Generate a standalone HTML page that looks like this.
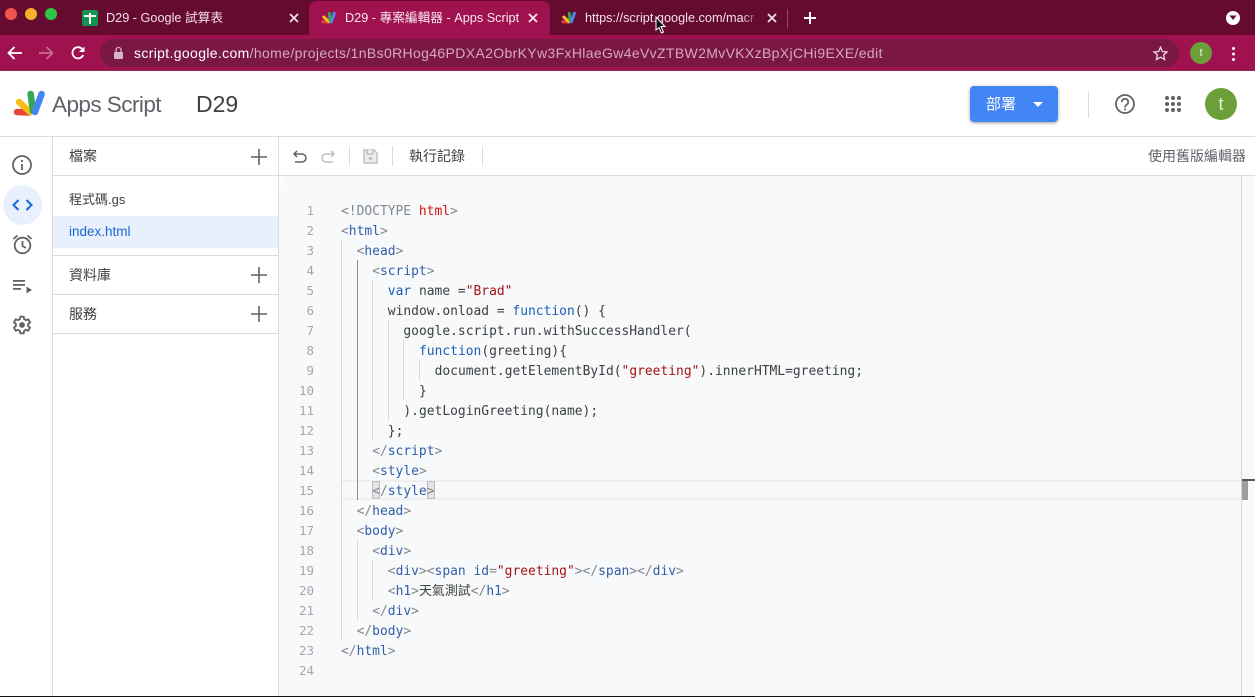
<!DOCTYPE html>
<html><head><meta charset="utf-8"><style>
html,body{margin:0;padding:0;width:1255px;height:697px;overflow:hidden;background:#fff}
body{position:relative;font-family:"Liberation Sans","Noto Sans CJK TC",sans-serif;color:#3c4043}
.a{position:absolute}
.t{position:absolute;white-space:nowrap}
svg{position:absolute;overflow:visible}
.c{position:absolute;left:0;margin-top:1px;white-space:pre;font:12.950px/20px "DejaVu Sans Mono","Noto Sans CJK TC",monospace;color:#3c4043}
.n{position:absolute;width:314px;left:0;text-align:right;font:12.500px/20px "DejaVu Sans Mono",monospace;color:#a4a8ad}
.g{color:#80868b}.b{color:#2f5fa8}.r{color:#a31515}.h{color:#d01010}.k{color:#1a5fb4}
.ig{position:absolute;width:1px;background:#d5d7da}
.ln{position:absolute;height:1px;background:#dadce0}
</style></head><body>
<!-- chrome tab bar -->
<div class="a" style="left:0;top:0;width:1255px;height:35px;background:#660b30"></div>
<div class="a" style="left:0;top:35px;width:1255px;height:36px;background:#a0124f"></div>
<div class="a" style="left:0;top:70px;width:1255px;height:1px;background:#8f2a55"></div>
<div class="a" style="left:309px;top:1px;width:241px;height:34px;background:#a0124f;border-radius:8px 8px 0 0"></div>
<div class="a" style="left:5px;top:8px;width:12px;height:12px;border-radius:50%;background:#f2544e"></div>
<div class="a" style="left:25px;top:8px;width:12px;height:12px;border-radius:50%;background:#f5b02e"></div>
<div class="a" style="left:45px;top:8px;width:12px;height:12px;border-radius:50%;background:#2fc546"></div>
<!-- sheets icon -->
<div class="a" style="left:82px;top:10px;width:16px;height:16px;background:#12934f;border-radius:2px"></div>
<div class="a" style="left:84px;top:15px;width:12px;height:2px;background:#fff"></div>
<div class="a" style="left:89px;top:13px;width:2px;height:11px;background:#fff"></div>
<div class="t" style="left:106px;top:10px;font-size:12.700px;line-height:16px;color:#f3dfe7">D29 - Google 試算表</div>
<svg style="left:290px;top:14px" width="8" height="8" stroke="#f3dfe7" stroke-width="1.800"><path d="M0 0L8 8M8 0L0 8"/></svg>
<svg style="left:321px;top:11px" width="16" height="14" viewBox="0 0 34 30"><g fill="none" stroke-linecap="round" stroke-width="6.500"><path d="M4 23L16 23.500" stroke="#e2463a"/><path d="M6 13L17 23" stroke="#f7bb1e"/><path d="M17.600 5L20 22" stroke="#33a852"/><path d="M28.600 5L22 23" stroke="#4a86ec"/></g></svg>
<div class="t" style="left:345px;top:10px;font-size:12.700px;line-height:16px;color:#f8e8ee">D29 - 專案編輯器 - Apps Script</div>
<svg style="left:529px;top:14px" width="8" height="8" stroke="#f8e8ee" stroke-width="1.800"><path d="M0 0L8 8M8 0L0 8"/></svg>
<svg style="left:561px;top:11px" width="16" height="14" viewBox="0 0 34 30"><g fill="none" stroke-linecap="round" stroke-width="6.500"><path d="M4 23L16 23.500" stroke="#e2463a"/><path d="M6 13L17 23" stroke="#f7bb1e"/><path d="M17.600 5L20 22" stroke="#33a852"/><path d="M28.600 5L22 23" stroke="#4a86ec"/></g></svg>
<div class="t" style="left:585px;top:10px;width:175px;overflow:hidden;font-size:12.700px;line-height:16px;color:#f3dfe7">https://script.google.com/macr</div>
<div class="a" style="left:742px;top:8px;width:18px;height:20px;background:linear-gradient(90deg,rgba(102,11,48,0),#660b30)"></div>
<svg style="left:768px;top:14px" width="8" height="8" stroke="#f3dfe7" stroke-width="1.800"><path d="M0 0L8 8M8 0L0 8"/></svg>
<div class="a" style="left:787px;top:9px;width:1px;height:19px;background:#8d4a66"></div>
<svg style="left:804px;top:12px" width="12" height="12" stroke="#fff" stroke-width="2"><path d="M6 0V12M0 6H12"/></svg>
<div class="a" style="left:1226px;top:11px;width:14px;height:14px;border-radius:50%;background:#fff"></div>
<svg style="left:1229px;top:15px" width="8" height="6"><path d="M0.500 0.500H7.500L4 5Z" fill="#660b30"/></svg>
<svg style="left:654px;top:16px" width="13" height="19"><path d="M2 1V14L5 11.500L7.500 17L9.500 16L7 10.500H11Z" fill="#111" stroke="#fff" stroke-width="1"/></svg>
<!-- toolbar -->
<svg style="left:7px;top:46px" width="15" height="14" fill="none" stroke="#fff" stroke-width="1.800"><path d="M15 7H1.500M7.500 1L1.500 7L7.500 13"/></svg>
<svg style="left:39px;top:46px" width="15" height="14" fill="none" stroke="#c66c91" stroke-width="1.800"><path d="M0 7H13.500M7.500 1L13.500 7L7.500 13"/></svg>
<svg style="left:71px;top:46px" width="14" height="14" fill="none" stroke="#fff" stroke-width="1.800"><path d="M12.200 9A5.600 5.600 0 1 1 11 2.800"/><path d="M13.500 0.500V6H8Z" fill="#fff" stroke="none"/></svg>
<div class="a" style="left:100px;top:39px;width:1079px;height:28px;border-radius:14px;background:#7a1744"></div>
<div class="a" style="left:114px;top:52px;width:9px;height:7px;background:#d8b4c4;border-radius:1px"></div>
<svg style="left:115px;top:47px" width="7" height="6" fill="none" stroke="#d8b4c4" stroke-width="1.300"><path d="M1 6V3A2.500 2.500 0 0 1 6 3V6"/></svg>
<div class="t" style="left:134px;top:44px;font-size:14px;line-height:18px;letter-spacing:.35px;color:#d6a9bd"><span style="color:#fff">script.google.com</span>/home/projects/1nBs0RHog46PDXA2ObrKYw3FxHlaeGw4eVvZTBW2MvVKXzBpXjCHi9EXE/edit</div>
<svg style="left:1153px;top:46px" width="15" height="15" fill="none" stroke="#f0dbe4" stroke-width="1.300"><path d="M7.500 1.200L9.400 5.500L14 6L10.600 9L11.600 13.600L7.500 11.200L3.400 13.600L4.400 9L1 6L5.600 5.500Z"/></svg>
<div class="a" style="left:1190px;top:42px;width:22px;height:22px;border-radius:50%;background:#6a9f3a;color:#eaf3e0;font-size:11px;line-height:22px;text-align:center">t</div>
<div class="a" style="left:1232px;top:47px;width:3px;height:3px;border-radius:50%;background:#fff;box-shadow:0 5.500px #fff,0 11px #fff"></div>
<!-- app header -->
<svg style="left:13px;top:89px" width="34" height="30" viewBox="0 0 34 30"><g fill="none" stroke-linecap="round" stroke-width="6.500"><path d="M4 23L16 23.500" stroke="#e2453a"/><path d="M6 13L17 23" stroke="#f9bc15"/><path d="M17.600 5L20 22" stroke="#33a852"/><path d="M28.600 5L22 23" stroke="#4285f4"/></g></svg>
<div class="t" style="left:52px;top:91px;font-size:22.500px;line-height:28px;letter-spacing:-.55px;color:#5f6368">Apps Script</div>
<div class="t" style="left:196px;top:89px;font-size:23px;line-height:30px;color:#3c4043">D29</div>
<div class="a" style="left:970px;top:86px;width:88px;height:36px;border-radius:4px;background:#4285f4;box-shadow:0 1px 3px rgba(60,64,67,.5)"></div>
<div class="t" style="left:986px;top:95px;font-size:15px;line-height:20px;color:#fff">部署</div>
<svg style="left:1033px;top:102px" width="10" height="5"><path d="M0 0H10L5 5Z" fill="#fff"/></svg>
<div class="a" style="left:1088px;top:91px;width:1px;height:27px;background:#dadce0"></div>
<svg style="left:1115px;top:94px" width="20" height="20" fill="none" stroke="#5f6368" stroke-width="1.800"><circle cx="10" cy="10" r="9"/><path d="M6.800 8A3.200 3.200 0 1 1 11.800 10.600C10.500 11.500 10 12 10 13.500" stroke-width="1.700"/><circle cx="10" cy="15.500" r="1" fill="#5f6368" stroke="none"/></svg>
<svg style="left:1165px;top:96px" width="16" height="16" fill="#5f6368"><circle cx="2" cy="2" r="2"/><circle cx="8" cy="2" r="2"/><circle cx="14" cy="2" r="2"/><circle cx="2" cy="8" r="2"/><circle cx="8" cy="8" r="2"/><circle cx="14" cy="8" r="2"/><circle cx="2" cy="14" r="2"/><circle cx="8" cy="14" r="2"/><circle cx="14" cy="14" r="2"/></svg>
<div class="a" style="left:1205px;top:88px;width:32px;height:32px;border-radius:50%;background:#6a9f3a;color:#e8f2dd;font-size:18px;line-height:32px;text-align:center">t</div>
<div class="ln" style="left:0;top:136px;width:1255px"></div>
<!-- left rail -->
<div class="a" style="left:52px;top:136px;width:1px;height:560px;background:#dadce0"></div>
<div class="a" style="left:278px;top:136px;width:1px;height:560px;background:#dadce0"></div>
<svg style="left:12px;top:155px" width="20" height="20" fill="none" stroke="#5f6368" stroke-width="1.800"><circle cx="10" cy="10" r="9"/><path d="M10 9V15"/><circle cx="10" cy="6" r="1.100" fill="#5f6368" stroke="none"/></svg>
<div class="a" style="left:3px;top:185px;width:39px;height:40px;border-radius:50%;background:#e8f0fe"></div>
<svg style="left:12px;top:199px" width="21" height="12" fill="none" stroke="#1967d2" stroke-width="2"><path d="M6.500 1L1.500 6L6.500 11M14.500 1L19.500 6L14.500 11"/></svg>
<svg style="left:12px;top:234px" width="21" height="21" fill="none" stroke="#5f6368" stroke-width="1.800"><circle cx="10.500" cy="11.500" r="7.800"/><path d="M10.500 7V12L14 14M1.500 5L5.500 1.500M19.500 5L15.500 1.500"/></svg>
<svg style="left:13px;top:280px" width="20" height="14" fill="#5f6368"><rect width="12" height="1.800" y="0"/><rect width="12" height="1.800" y="4"/><rect width="8" height="1.800" y="8"/><path d="M13.500 6.500L19 10L13.500 13.500Z"/></svg>
<svg style="left:12px;top:315px" width="20" height="20" viewBox="0 0 24 24" fill="none" stroke="#5f6368" stroke-width="2.200"><path d="M10 2H14L14.600 5A7.500 7.500 0 0 1 16.700 6.200L19.600 5.200L21.600 8.800L19.300 10.800A7.500 7.500 0 0 1 19.300 13.200L21.600 15.200L19.600 18.800L16.700 17.800A7.500 7.500 0 0 1 14.600 19L14 22H10L9.400 19A7.500 7.500 0 0 1 7.300 17.800L4.400 18.800L2.400 15.200L4.700 13.200A7.500 7.500 0 0 1 4.700 10.800L2.400 8.800L4.400 5.200L7.300 6.200A7.500 7.500 0 0 1 9.400 5Z"/><circle cx="12" cy="12" r="3.500" fill="#5f6368" stroke="none"/></svg>
<!-- files -->
<div class="t" style="left:69px;top:147px;font-size:14px;line-height:18px">檔案</div>
<svg style="left:251px;top:148.500px" width="16" height="16" stroke="#5f6368" stroke-width="1.600"><path d="M8 0V16M0 8H16"/></svg>
<div class="ln" style="left:53px;top:175px;width:225px"></div>
<div class="t" style="left:69px;top:191px;font-size:13px;line-height:18px">程式碼.gs</div>
<div class="a" style="left:53px;top:216px;width:225px;height:32px;background:#e8f0fe"></div>
<div class="t" style="left:69px;top:223px;font-size:13.500px;line-height:18px;color:#1967d2">index.html</div>
<div class="ln" style="left:53px;top:255px;width:225px"></div>
<div class="t" style="left:69px;top:266px;font-size:14px;line-height:18px">資料庫</div>
<svg style="left:251px;top:267px" width="16" height="16" stroke="#5f6368" stroke-width="1.600"><path d="M8 0V16M0 8H16"/></svg>
<div class="ln" style="left:53px;top:294px;width:225px"></div>
<div class="t" style="left:69px;top:305px;font-size:14px;line-height:18px">服務</div>
<svg style="left:251px;top:306px" width="16" height="16" stroke="#5f6368" stroke-width="1.600"><path d="M8 0V16M0 8H16"/></svg>
<div class="ln" style="left:53px;top:333px;width:225px"></div>
<!-- editor toolbar -->
<svg style="left:293px;top:150px" width="14" height="13" fill="none" stroke="#5f6368" stroke-width="1.500"><path d="M4 1L1 4L4 7M1 4H9A4 4 0 0 1 9 12H2"/></svg>
<svg style="left:321px;top:150px" width="14" height="13" fill="none" stroke="#bdc1c6" stroke-width="1.500"><path d="M10 1L13 4L10 7M13 4H5A4 4 0 0 0 5 12H12"/></svg>
<div class="a" style="left:349px;top:146px;width:1px;height:20px;background:#dadce0"></div>
<svg style="left:363px;top:149px" width="15" height="15" fill="#eceef0" stroke="#bdc1c6" stroke-width="1.500"><path d="M1 1H11L14 4V14H1Z"/><path d="M4 1V5H10V1"/><circle cx="7.500" cy="9.500" r="1.800" fill="#bdc1c6" stroke="none"/></svg>
<div class="a" style="left:392px;top:146px;width:1px;height:20px;background:#dadce0"></div>
<div class="t" style="left:409px;top:147px;font-size:14px;line-height:18px;letter-spacing:0">執行記錄</div>
<div class="a" style="left:482px;top:146px;width:1px;height:20px;background:#dadce0"></div>
<div class="t" style="left:1148px;top:147px;font-size:14px;line-height:18px;color:#5f6368">使用舊版編輯器</div>
<div class="ln" style="left:279px;top:175px;width:976px"></div>
<!-- editor -->
<div class="a" style="left:279px;top:176px;width:976px;height:520px;background:#f8f9fa"></div>
<div class="a" style="left:279px;top:176px;width:3px;height:15px;background:#fff;opacity:.5"></div>
<div class="a" style="left:1241px;top:176px;width:1px;height:520px;background:#d3d5d8"></div>
<div class="a" style="left:342px;top:480px;width:899px;height:20px;box-sizing:border-box;border-top:2px solid #eeeff0;border-bottom:2px solid #eeeff0"></div>
<div class="a" style="left:1242px;top:480px;width:6px;height:20px;background:#9e9e9e"></div>
<div class="a" style="left:1242px;top:479px;width:13px;height:2px;background:#555"></div>
<div class="a" style="left:0;top:696px;width:1255px;height:1px;background:#111"></div>
<!-- guides -->
<div class="ig" style="left:341px;top:240px;height:400px"></div>
<div class="ig" style="left:357px;top:260px;height:240px;background:#8a8d91"></div>
<div class="ig" style="left:372px;top:280px;height:160px"></div>
<div class="ig" style="left:388px;top:320px;height:100px"></div>
<div class="ig" style="left:403px;top:340px;height:60px"></div>
<div class="ig" style="left:419px;top:360px;height:20px"></div>
<div class="ig" style="left:357px;top:540px;height:80px"></div>
<div class="ig" style="left:372px;top:560px;height:40px"></div>
<!-- bracket match -->
<div class="a" style="left:372px;top:481px;width:8px;height:18px;background:#e3e4e6;box-shadow:inset 0 0 0 1px #bcbec1"></div>
<div class="a" style="left:427px;top:481px;width:8px;height:18px;background:#e3e4e6;box-shadow:inset 0 0 0 1px #bcbec1"></div>
<!-- line numbers -->
<div class="n" style="top:201px">1</div><div class="n" style="top:221px">2</div><div class="n" style="top:241px">3</div><div class="n" style="top:261px">4</div><div class="n" style="top:281px">5</div><div class="n" style="top:301px">6</div><div class="n" style="top:321px">7</div><div class="n" style="top:341px">8</div><div class="n" style="top:361px">9</div><div class="n" style="top:381px">10</div><div class="n" style="top:401px">11</div><div class="n" style="top:421px">12</div><div class="n" style="top:441px">13</div><div class="n" style="top:461px">14</div><div class="n" style="top:481px">15</div><div class="n" style="top:501px">16</div><div class="n" style="top:521px">17</div><div class="n" style="top:541px">18</div><div class="n" style="top:561px">19</div><div class="n" style="top:581px">20</div><div class="n" style="top:601px">21</div><div class="n" style="top:621px">22</div><div class="n" style="top:641px">23</div><div class="n" style="top:661px">24</div>
<!-- code -->
<div class="c" style="left:341px;top:201px"><span class="g">&lt;!DOCTYPE </span><span class="h">html</span><span class="g">&gt;</span></div>
<div class="c" style="left:341px;top:221px"><span class="g">&lt;</span><span class="b">html</span><span class="g">&gt;</span></div>
<div class="c" style="left:356.600px;top:241px"><span class="g">&lt;</span><span class="b">head</span><span class="g">&gt;</span></div>
<div class="c" style="left:372.200px;top:261px"><span class="g">&lt;</span><span class="b">script</span><span class="g">&gt;</span></div>
<div class="c" style="left:387.800px;top:281px"><span class="k">var</span> name =<span class="r">"Brad"</span></div>
<div class="c" style="left:387.800px;top:301px">window.onload = <span class="k">function</span>() {</div>
<div class="c" style="left:403.400px;top:321px">google.script.run.withSuccessHandler(</div>
<div class="c" style="left:419px;top:341px"><span class="k">function</span>(greeting){</div>
<div class="c" style="left:434.600px;top:361px">document.getElementById(<span class="r">"greeting"</span>).innerHTML=greeting;</div>
<div class="c" style="left:419px;top:381px">}</div>
<div class="c" style="left:403.400px;top:401px">).getLoginGreeting(name);</div>
<div class="c" style="left:387.800px;top:421px">};</div>
<div class="c" style="left:372.200px;top:441px"><span class="g">&lt;/</span><span class="b">script</span><span class="g">&gt;</span></div>
<div class="c" style="left:372.200px;top:461px"><span class="g">&lt;</span><span class="b">style</span><span class="g">&gt;</span></div>
<div class="c" style="left:372.200px;top:481px"><span class="g">&lt;/</span><span class="b">style</span><span class="g">&gt;</span></div>
<div class="c" style="left:356.600px;top:501px"><span class="g">&lt;/</span><span class="b">head</span><span class="g">&gt;</span></div>
<div class="c" style="left:356.600px;top:521px"><span class="g">&lt;</span><span class="b">body</span><span class="g">&gt;</span></div>
<div class="c" style="left:372.200px;top:541px"><span class="g">&lt;</span><span class="b">div</span><span class="g">&gt;</span></div>
<div class="c" style="left:387.800px;top:561px"><span class="g">&lt;</span><span class="b">div</span><span class="g">&gt;&lt;</span><span class="b">span</span> <span class="b">id</span><span class="g">=</span><span class="r">"greeting"</span><span class="g">&gt;&lt;/</span><span class="b">span</span><span class="g">&gt;&lt;/</span><span class="b">div</span><span class="g">&gt;</span></div>
<div class="c" style="left:387.800px;top:581px"><span class="g">&lt;</span><span class="b">h1</span><span class="g">&gt;</span>天氣測試<span class="g">&lt;/</span><span class="b">h1</span><span class="g">&gt;</span></div>
<div class="c" style="left:372.200px;top:601px"><span class="g">&lt;/</span><span class="b">div</span><span class="g">&gt;</span></div>
<div class="c" style="left:356.600px;top:621px"><span class="g">&lt;/</span><span class="b">body</span><span class="g">&gt;</span></div>
<div class="c" style="left:341px;top:641px"><span class="g">&lt;/</span><span class="b">html</span><span class="g">&gt;</span></div>
</body></html>
